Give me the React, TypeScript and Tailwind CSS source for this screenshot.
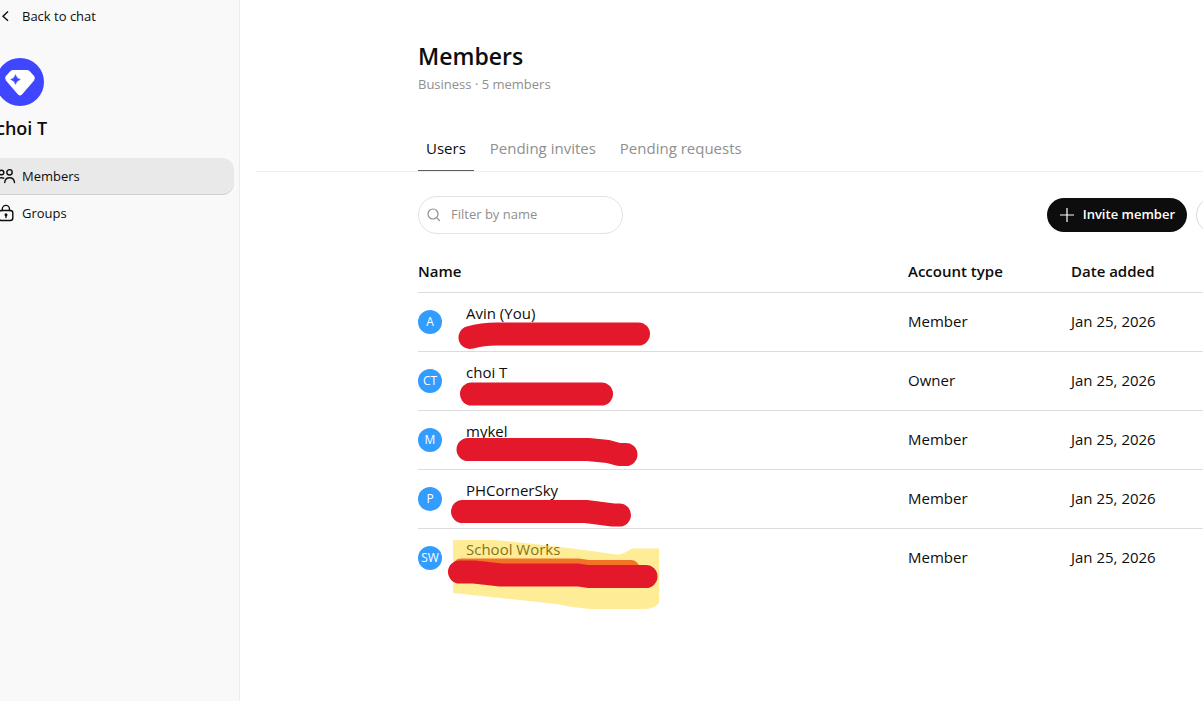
import React from "react";

const members = [
  { initials: "A", name: "Avin (You)", type: "Member" },
  { initials: "CT", name: "choi T", type: "Owner" },
  { initials: "M", name: "mykel", type: "Member" },
  { initials: "P", name: "PHCornerSky", type: "Member" },
  { initials: "SW", name: "School Works", type: "Member" },
];

/* Marker strokes that cover the e-mail addresses, in row coordinates from the name column. */
const strokes = [
  "M4 44.500 Q16 41 31 41 H172.500",
  "M5.500 42 H135.500",
  "M2 38.500 H122 L142 40.500 L153 43.500 H160",
  "M-3.500 41.500 H120 L147 45 H153.500",
  "M-6.500 43 H8 L35 46 H112 L122 47.500 H180",
];

function Redaction({ index }: { index: number }) {
  return (
    <svg
      className="pointer-events-none absolute -left-5 top-0 h-[90px] w-[230px]"
      viewBox="-20 0 230 90"
      fill="none"
      aria-hidden="true"
    >
      {index === 4 && (
        <>
          <path d="M-5 38 H112 L122 39.500 H165" stroke="#e4182b" strokeWidth="17" strokeLinecap="round" />
          <path
            d="M-13 11 H28 Q70 15 118 21 L150 25.500 Q155 26 160 23 L166 19.500 H193 V74 Q188 80 178 80 H125 Q110 79 90 75 L-13 64 Z"
            fill="#ffd726"
            fillOpacity="0.48"
          />
        </>
      )}
      <path d={strokes[index]} stroke="#e4182b" strokeWidth="23" strokeLinecap="round" strokeLinejoin="round" />
    </svg>
  );
}

export default function App() {
  return (
    <div className="flex min-h-screen overflow-hidden bg-white font-['Open_Sans','Noto_Sans',sans-serif] text-[#0d0d0d]">
      <aside className="w-60 shrink-0 border-r border-[#ececec] bg-[#f9f9f9] text-[13px] leading-5">
        <a href="#chat" className="flex h-8 items-center gap-3">
          <svg className="h-4 w-[10px]" viewBox="0 0 10 16" fill="none" stroke="currentColor" strokeWidth="1.4" aria-hidden="true">
            <path d="M8 3.5 3 8.2 8 12.8" />
          </svg>
          Back to chat
        </a>
        <svg className="mt-[26px] -ml-1 size-12" viewBox="0 0 48 48" aria-hidden="true">
          <circle cx="24" cy="24" r="24" fill="#3e46ff" />
          <path d="M17.500 12h13q2 0 3.500 1.400l4.300 4.800q1.500 2.200-.2 4.300L26 36.500q-2 2.200-4 0L9.900 22.500q-1.700-2.100-.2-4.300l4.300-4.800q1.500-1.400 3.500-1.400Z" fill="#fff" />
          <path d="M19.500 16.700q.9 3.900 4.800 4.800-3.900.9-4.800 4.800-.9-3.900-4.800-4.800 3.900-.9 4.800-4.800Z" fill="#3e46ff" stroke="#3e46ff" strokeWidth=".6" />
        </svg>
        <h2 className="mt-2 -ml-1 text-lg font-semibold leading-7">choi T</h2>
        <nav className="mt-4">
          <a href="#members" className="mr-[5px] flex h-[37px] items-center gap-2 rounded-r-xl border-b border-[#cfcfcf] bg-[#e9e9e9]">
            <svg className="h-4 w-[14px] overflow-visible" viewBox="0 0 14 16" fill="none" stroke="currentColor" strokeWidth="1.4" strokeLinecap="round" aria-hidden="true">
              <circle cx="1.500" cy="4.500" r="2.300" />
              <circle cx="9.500" cy="4.300" r="2.700" />
              <path d="M4.700 14.500q.6-4.800 4.900-4.800t4.900 4.800M-1 10q3-.6 4.700.2" />
            </svg>
            Members
          </a>
          <a href="#groups" className="flex h-9 items-center gap-2">
            <svg className="h-[18px] w-[14px]" viewBox="0 0 14 18" fill="none" stroke="currentColor" strokeWidth="1.400" strokeLinecap="round" aria-hidden="true">
              <rect x="-1" y="6.500" width="13.800" height="10" rx="2.500" />
              <path d="M2.300 6.500V5a3.600 3.600 0 0 1 7.200 0v1.500M6 11v2.500" />
              <circle cx="6" cy="10.700" r=".8" fill="currentColor" />
            </svg>
            Groups
          </a>
        </nav>
      </aside>

      <main className="min-w-0 flex-1 pl-4">
        <header className="pl-[162px] pt-10">
          <h1 className="text-[23px] font-semibold leading-8">Members</h1>
          <p className="mt-0.5 text-[13px] leading-5 text-[#8f8f8f]">Business · 5 members</p>
        </header>
        <div className="mt-8 flex gap-2 border-b border-[#ededed] pl-[162px] text-[15px]" role="tablist">
          <button role="tab" aria-selected="true" className="h-[45px] border-b border-[#5d5d5d] px-2">Users</button>
          <button role="tab" aria-selected="false" className="h-[45px] px-2 text-[#8f8f8f]">Pending invites</button>
          <button role="tab" aria-selected="false" className="h-[45px] px-2 text-[#8f8f8f]">Pending requests</button>
        </div>

        <section className="pl-[162px] pt-6">
          <div className="flex items-center justify-between">
            <label className="flex h-[38px] w-[205px] items-center gap-2 rounded-full border border-[#e3e3e3] px-2">
              <svg className="size-4 shrink-0" viewBox="0 0 16 16" fill="none" stroke="#8f8f8f" strokeWidth="1.200" strokeLinecap="round" aria-hidden="true">
                <circle cx="6" cy="7" r="5" />
                <path d="m9.700 10.700 2.800 2.800" />
              </svg>
              <input aria-label="Filter by name" placeholder="Filter by name" className="min-w-0 flex-1 bg-transparent text-[13px] outline-none placeholder:text-[#8f8f8f]" />
            </label>
            <div className="-mr-8 flex items-center gap-[9px]">
              <button className="flex h-[34px] items-center gap-2 rounded-full bg-[#0d0d0d] px-3 text-[13px] font-semibold text-white">
                <svg className="size-4" viewBox="0 0 16 16" stroke="currentColor" strokeWidth="1.200" aria-hidden="true">
                  <path d="M8 1v14M1 8h14" />
                </svg>
                Invite member
              </button>
              <button aria-label="More options" className="h-9 w-[39px] rounded-full border border-[#d9d9d9]" />
            </div>
          </div>

          <table className="mt-[17px] w-full table-fixed text-left text-[15px] leading-6">
            <thead>
              <tr className="h-[41px] border-b border-[#dcdcdc]">
                <th className="font-semibold">Name</th>
                <th className="w-[163px] font-semibold">Account type</th>
                <th className="w-[132px] font-semibold">Date added</th>
              </tr>
            </thead>
            <tbody>
              {members.map((member, index) => (
                <tr key={member.name} className="h-[59px] border-b border-[#dcdcdc] last:border-0">
                  <td className="p-0 align-top">
                    <div className="flex gap-6">
                      <span className="mt-[17px] flex size-6 items-center justify-center rounded-full bg-[#339cff] text-xs text-white">
                        {member.initials}
                      </span>
                      <div className="relative pt-2">
                        {member.name}
                        <Redaction index={index} />
                      </div>
                    </div>
                  </td>
                  <td className="pb-0.5">{member.type}</td>
                  <td className="pb-0.5">Jan 25, 2026</td>
                </tr>
              ))}
            </tbody>
          </table>
        </section>
      </main>
    </div>
  );
}
